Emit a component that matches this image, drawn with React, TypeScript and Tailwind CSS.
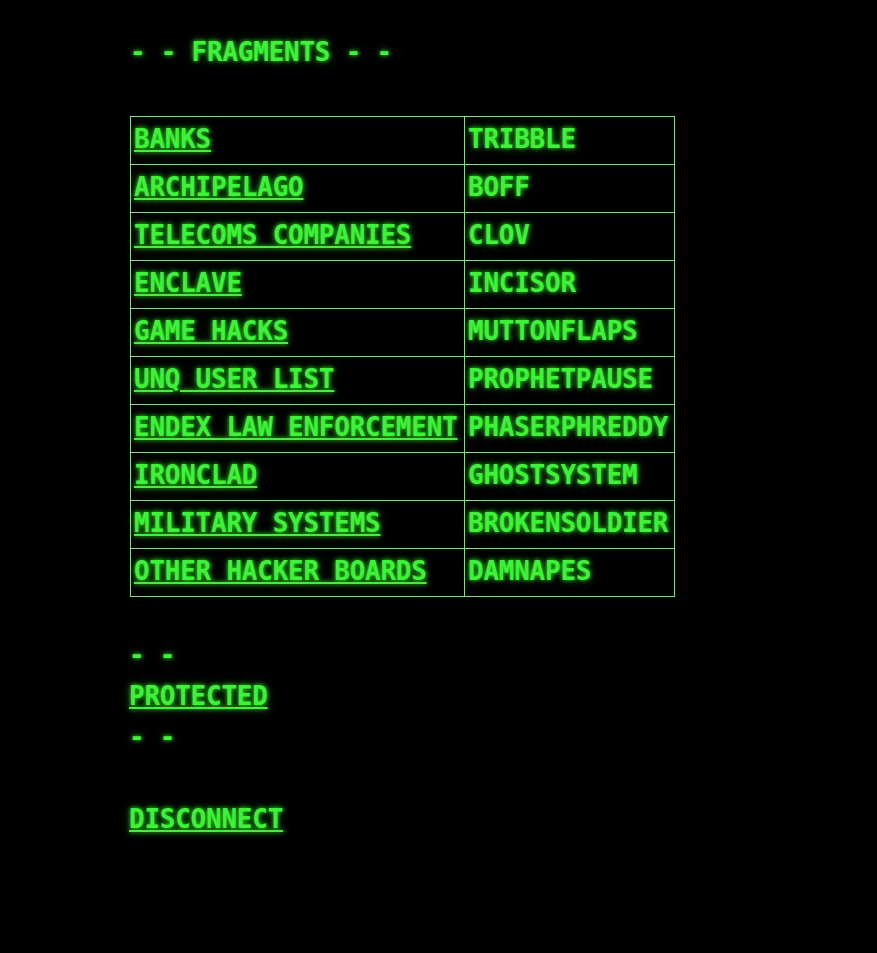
const ROWS: [string, string][] = [
  ['BANKS', 'TRIBBLE'],
  ['ARCHIPELAGO', 'BOFF'],
  ['TELECOMS COMPANIES', 'CLOV'],
  ['ENCLAVE', 'INCISOR'],
  ['GAME HACKS', 'MUTTONFLAPS'],
  ['UNQ USER LIST', 'PROPHETPAUSE'],
  ['ENDEX LAW ENFORCEMENT', 'PHASERPHREDDY'],
  ['IRONCLAD', 'GHOSTSYSTEM'],
  ['MILITARY SYSTEMS', 'BROKENSOLDIER'],
  ['OTHER HACKER BOARDS', 'DAMNAPES'],
];

const term =
  "font-['DejaVu_Sans_Mono','Liberation_Mono',monospace] font-bold text-[26px] tracking-[-0.25px] text-[#3ef23a] [text-shadow:0_0_4px_rgba(60,255,40,0.8),0_0_9px_rgba(60,255,40,0.45)]";

function TermLink({ children }: { children: string }) {
  return (
    <a href="#" className="underline decoration-2 underline-offset-[2px] whitespace-pre">
      {children}
    </a>
  );
}

export default function App() {
  return (
    <div className={`min-h-screen bg-black pl-[130px] pt-[38px] ${term}`}>
      <p className="h-[28px] leading-[28px] whitespace-pre">- - FRAGMENTS - -</p>

      <table className="mt-[50px] border-collapse border border-[#8ed88a]">
        <tbody>
          {ROWS.map(([board, sysop]) => (
            <tr key={board} className="h-[48px]">
              <td className="w-[334px] border border-[#8ed88a] px-[3px] pb-[4px] leading-[30px] align-middle">
                <TermLink>{board}</TermLink>
              </td>
              <td className="w-[210px] border border-[#8ed88a] px-[3px] pb-[4px] leading-[30px] align-middle whitespace-pre">
                {sysop}
              </td>
            </tr>
          ))}
        </tbody>
      </table>

      <div className="mt-[38px] leading-[41px] -ml-px">
        <p className="h-[41px] whitespace-pre">- -</p>
        <p className="h-[41px]"><TermLink>PROTECTED</TermLink></p>
        <p className="h-[41px] whitespace-pre">- -</p>
        <p className="h-[41px]"></p>
        <p className="h-[41px]"><TermLink>DISCONNECT</TermLink></p>
      </div>
    </div>
  );
}
